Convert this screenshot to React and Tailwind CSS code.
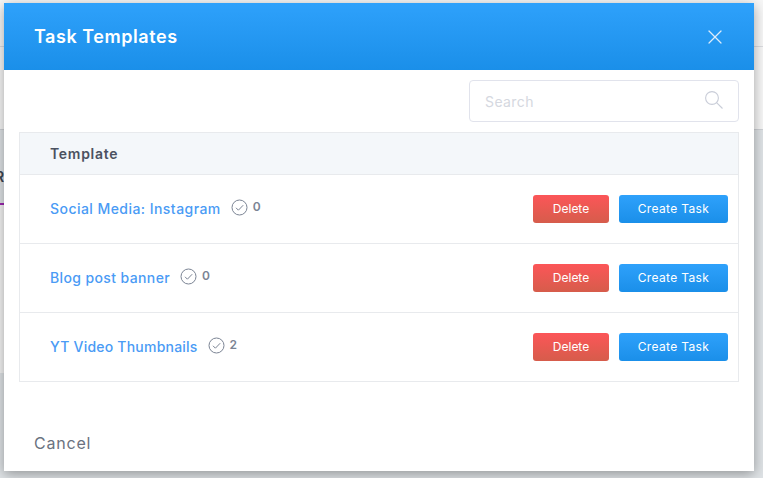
import React from 'react';
import { X } from 'lucide-react';

const templates = [
  { name: 'Social Media: Instagram', count: 0, tracking: 'tracking-[0.45px]' },
  { name: 'Blog post banner', count: 0, tracking: 'tracking-[0.38px]' },
  { name: 'YT Video Thumbnails', count: 2, tracking: 'tracking-[0.22px]' },
];

const CheckCircle = () => (
  <svg width="17" height="17" viewBox="0 0 17 17" fill="none" stroke="#7b8494" strokeWidth="1">
    <circle cx="8.5" cy="8.5" r="7.5" />
    <path d="M5 8.8l2.4 2.4 4.8-5" />
  </svg>
);

const SearchIcon = () => (
  <svg width="18" height="18" viewBox="0 0 18 18" fill="none" stroke="#c9cdd8" strokeWidth="1.1">
    <circle cx="7" cy="7" r="6.4" />
    <path d="M11.6 11.6l5.9 5.9" />
  </svg>
);

const TemplateRow = ({ template }) => (
  <div className="flex items-center h-[69px] pl-[30px] pr-[10px] border-b border-[#e8eaed]">
    <span className={`mb-[1px] text-[14px] font-medium text-[#4a9bf5] ${template.tracking}`}>{template.name}</span>
    <span className="ml-[10px] mb-[4px]"><CheckCircle /></span>
    <span className="ml-[5px] mb-[5px] text-[12px] font-semibold text-[#7b8494]">{template.count}</span>
    <div className="ml-auto flex gap-[10px]">
      <button className="w-[76px] h-[28px] rounded-[3px] text-[12px] text-white bg-gradient-to-b from-[#fc5558] to-[#d65c4b]">Delete</button>
      <button className="w-[109px] h-[28px] rounded-[3px] text-[12px] text-white tracking-[0.35px] bg-gradient-to-b from-[#2ea1fb] to-[#1a8fe9]">Create Task</button>
    </div>
  </div>
);

const App = () => {
  return (
    <div className="relative h-[478px] w-[763px] overflow-hidden bg-[#dfe3e6] font-['Inter',sans-serif]">
      {/* page behind the modal */}
      <div className="absolute left-0 right-0 top-0 h-[130px] border-b border-[#cfd2d6] bg-[#f7f7f7]" />
      <div className="absolute left-0 right-0 top-[46px] h-px bg-[#dcdde1]" />
      <div className="absolute left-0 top-[205px] h-[168px] w-[4px] bg-[#f4f4f4]" />
      <span className="absolute left-[-5px] top-[166px] text-[14px] font-semibold text-[#3c4350]">R</span>
      <div className="absolute left-0 top-[203px] h-[2px] w-[4px] bg-[#9c27b0]" />

      {/* modal */}
      <div className="absolute left-[4px] top-[3px] flex h-[468px] w-[750px] flex-col bg-white shadow-[0_3px_12px_rgba(0,0,0,0.35)]">
        <div className="flex h-[67px] items-center justify-between pl-[30px] pr-[27px] bg-gradient-to-b from-[#2ea1fb] to-[#1a8fe9]">
          <h2 className="text-[18px] font-semibold text-white tracking-[0.55px]">Task Templates</h2>
          <X size={24} strokeWidth={1.2} className="text-[#dcecfb]" />
        </div>
        <div className="flex justify-end pt-[10px] pr-[15px]">
          <div className="flex h-[42px] w-[270px] items-center justify-between rounded-[4px] border border-[#e1e3ec] pl-[15px] pr-[15px]">
            <span className="text-[14px] text-[#d5d8e0] tracking-[0.4px]">Search</span>
            <span className="mb-[2px]"><SearchIcon /></span>
          </div>
        </div>
        <div className="mx-[15px] mt-[10px] border border-b-0 border-[#e8eaed]">
          <div className="flex h-[42px] items-center border-b border-[#e8eaed] bg-[#f4f7fa] pl-[30px] pb-[1px] text-[14px] font-semibold tracking-[0.7px] text-[#4b5160]">
            Template
          </div>
          {templates.map((template) => (
            <TemplateRow key={template.name} template={template} />
          ))}
        </div>
        <div className="mt-auto pb-[16px] pl-[30px] text-[16px] text-[#6b7280] tracking-[0.8px]">Cancel</div>
      </div>
    </div>
  );
};

export default App;
